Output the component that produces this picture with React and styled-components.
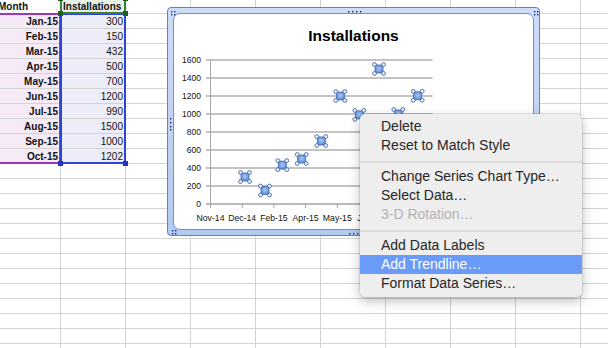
/* Librerias */
import styled, { createGlobalStyle } from "styled-components";

/*
  * Hoja de cálculo con gráfico de dispersión y menú contextual
*/

const COL_W = 65;
const ROW_H = 15;
const SHEET_X = -4; // la hoja está desplazada: la columna A se ve cortada
const SHEET_Y = -1;
const COLS = 10;
const ROWS = 24;

const PURPLE_BG = "#f5eaf6";
const BLUE_BG = "#ededf9";
const GREEN_BG = "#eaf1e6";

const data = [
  ["Jan-15", 300],
  ["Feb-15", 150],
  ["Mar-15", 432],
  ["Apr-15", 500],
  ["May-15", 700],
  ["Jun-15", 1200],
  ["Jul-15", 990],
  ["Aug-15", 1500],
  ["Sep-15", 1000],
  ["Oct-15", 1202],
];

// Posición horizontal de cada punto (eje de fechas)
const pointX = [245, 265, 282.3, 301.7, 321.3, 340.3, 359.3, 379, 398.3, 417.7];
const axisLabels = ["Nov-14", "Dec-14", "Feb-15", "Apr-15", "May-15", "Jul-15", "Aug-15", "Oct-15"];

const valueY = (v) => 204 - v * 0.09;
const lineX = (c) => SHEET_X + (c + 1) * COL_W - 1;
const lineY = (r) => SHEET_Y + (r + 1) * ROW_H - 1;

const GlobalStyle = createGlobalStyle`
  html, body {
    margin: 0;
    padding: 0;
    background: #fff;
    overflow: hidden;
  }

  body {
    font-family: "Liberation Sans", Arial, sans-serif;
  }
`;

// Lienzo de la pantalla
const Screen = styled.div`
  position: relative;
  width: 608px;
  height: 348px;
  overflow: hidden;
`;

// Cuadrícula de celdas
const Sheet = styled.div`
  display: grid;
  grid-template-columns: repeat(${COLS}, ${COL_W}px);
  grid-auto-rows: ${ROW_H}px;
  margin: ${SHEET_Y}px 0 0 ${SHEET_X}px;
  width: max-content;
`;

const Cell = styled.div`
  box-sizing: border-box;
  border-right: 1px solid #d3d3d3;
  border-bottom: 1px solid #d3d3d3;
  padding: 2px 2px 0;

  font-size: 10px;
  line-height: 12px;
  font-weight: ${(p) => (p.$bold ? 700 : 400)};
  text-align: ${(p) => p.$align || "left"};
  color: #111;
  background: ${(p) => p.$tint || "#fff"};

  white-space: nowrap;
  overflow: hidden;
`;

// Rangos resaltados por la serie seleccionada
const Range = styled.div`
  position: absolute;
  box-sizing: border-box;
  border: 2px solid ${(p) => p.$color};
  pointer-events: none;
`;

const Handle = styled.span`
  position: absolute;
  width: 5px;
  height: 5px;
  background: ${(p) => p.$color};
  ${(p) => (p.$top ? "top: -4px;" : "bottom: -4px;")}
  ${(p) => (p.$left ? "left: -4px;" : "right: -4px;")}
`;

// Ventana del gráfico
const ChartWindow = styled.div`
  position: absolute;
  left: 167px;
  top: 7px;
  width: 373px;
  height: 229px;
  box-sizing: border-box;
  padding: 5px;

  background: linear-gradient(to bottom, #cfdcf8, #b3caf2);
  border: 1px solid #5b7fdf;
  border-radius: 4px;
`;

const ChartBody = styled.div`
  box-sizing: border-box;
  height: 100%;
  display: flex;
  flex-direction: column;

  background: #fff;
  border: 1px solid #6e8de2;
  border-radius: 7px;
  overflow: hidden;
`;

const ChartTitle = styled.div`
  padding-top: 13px;
  font-size: 15.5px;
  line-height: 18px;
  font-weight: 700;
  text-align: center;
  color: #000;
`;

const PlotSvg = styled.svg`
  display: block;
  flex: 1;
  font-family: "Liberation Sans", Arial, sans-serif;
`;

const Grip = styled.svg`
  position: absolute;
  left: ${(p) => p.$x}px;
  top: ${(p) => p.$y}px;
  overflow: visible;
`;

// Menú contextual
const Menu = styled.div`
  position: absolute;
  left: 360px;
  top: 114px;
  width: 222px;
  box-sizing: border-box;
  padding: 3px 0 4px;

  background: #eeeeee;
  border-radius: 5px;
  box-shadow: 0 0 0 1px rgba(0, 0, 0, 0.09), 0 4px 12px rgba(0, 0, 0, 0.25);

  font-size: 14px;
`;

const MenuItem = styled.div`
  height: 19px;
  line-height: 19px;
  padding-left: 21px;
  white-space: nowrap;

  color: ${(p) => (p.$disabled ? "#b3b3b3" : p.$active ? "#fff" : "#262626")};
  background: ${(p) => (p.$active ? "#6a9bf8" : "transparent")};
`;

const MenuSeparator = styled.div`
  height: 2px;
  margin: 6px 0 4px;
  background: #dcdcdc;
`;

function SheetGrid() {
  const cells = [];

  for (let r = 0; r < ROWS; r++) {
    for (let c = 0; c < COLS; c++) {
      let text = "";
      let props = {};

      if (r === 0 && c === 0) {
        text = "Month";
        props = { $bold: true };
      } else if (r === 0 && c === 1) {
        text = "Installations";
        props = { $bold: true, $tint: GREEN_BG };
      } else if (r >= 1 && r <= data.length && c < 2) {
        const [month, value] = data[r - 1];
        text = c === 0 ? month : value;
        props = c === 0
          ? { $bold: true, $align: "right", $tint: PURPLE_BG }
          : { $align: "right", $tint: BLUE_BG };
      }

      cells.push(<Cell key={`${r}-${c}`} {...props}>{text}</Cell>);
    }
  }

  return <Sheet>{cells}</Sheet>;
}

function SeriesRange({ c1, c2, r1, r2, color, handle }) {
  const left = lineX(c1);
  const top = lineY(r1);

  return (
    <Range
      $color={color}
      style={{ left, top, width: lineX(c2) - left + 1, height: lineY(r2) - top + 1 }}
    >
      <Handle $color={handle} $top $left />
      <Handle $color={handle} $top />
      <Handle $color={handle} $left />
      <Handle $color={handle} />
    </Range>
  );
}

function GripDots({ x, y, dots }) {
  return (
    <Grip $x={x} $y={y} width="14" height="14">
      {dots.map(([dx, dy], i) => (
        <rect key={i} x={dx} y={dy} width="1.4" height="1.4" fill="#1c2b6b" />
      ))}
    </Grip>
  );
}

function Marker({ x, y }) {
  const corners = [[-4.5, -4.5], [4.5, -4.5], [-4.5, 4.5], [4.5, 4.5]];

  return (
    <g transform={`translate(${x} ${y})`}>
      <rect x="-4" y="-4" width="8" height="8" fill="url(#markerFill)" stroke="#3f66ad" strokeWidth="0.8" />
      {corners.map(([dx, dy], i) => (
        <circle key={i} cx={dx} cy={dy} r="1.9" fill="#eef3fc" stroke="#44649e" strokeWidth="0.9" />
      ))}
    </g>
  );
}

function Chart() {
  const grid = [200, 400, 600, 800, 1000, 1200, 1400, 1600];
  const ticks = axisLabels.map((_, i) => 210.5 + i * 31.7);

  return (
    <ChartWindow>
      <ChartBody>
        <ChartTitle>Installations</ChartTitle>

        <PlotSvg viewBox="174 45 359 184" width="359" height="184">
          <defs>
            <radialGradient id="markerFill" cx="50%" cy="45%" r="65%">
              <stop offset="0" stopColor="#a9c8f4" />
              <stop offset="1" stopColor="#4e80d4" />
            </radialGradient>
          </defs>

          {grid.map((v) => (
            <line key={v} x1="206" x2="432.5" y1={valueY(v)} y2={valueY(v)} stroke="#c3c3c3" strokeWidth="1.8" />
          ))}

          <line x1="210.5" x2="210.5" y1="60" y2="204" stroke="#a8a8a8" strokeWidth="1" />
          <line x1="206" x2="432.5" y1="204" y2="204" stroke="#a3a3a3" strokeWidth="1.5" />

          {ticks.map((t) => (
            <line key={t} x1={t} x2={t} y1="204" y2="208" stroke="#a3a3a3" strokeWidth="1" />
          ))}

          {[0, ...grid].map((v) => (
            <text key={v} x="201" y={valueY(v) + 3} fontSize="8.5" textAnchor="end" fill="#111">
              {v}
            </text>
          ))}

          {axisLabels.map((label, i) => (
            <text key={label} x={ticks[i]} y="221" fontSize="8.7" textAnchor="middle" fill="#111">
              {label}
            </text>
          ))}

          {data.map(([month, value], i) => (
            <Marker key={month} x={pointX[i]} y={valueY(value)} />
          ))}
        </PlotSvg>
      </ChartBody>

      {/* Asas de redimensionado del marco */}
      <GripDots x={3} y={3} dots={[[0, 0], [3, 0], [0, 3], [3, 3]]} />
      <GripDots x={180} y={2.5} dots={[[0, 0], [4, 0], [8, 0], [12, 0]]} />
      <GripDots x={366} y={3} dots={[[0, 0], [3, 0], [0, 3], [3, 3]]} />
      <GripDots x={2} y={110} dots={[[0, 0], [0, 4], [0, 8], [0, 11]]} />
      <GripDots x={3.5} y={222} dots={[[0, 0], [3, 0], [0, 3], [3, 3]]} />
      <GripDots x={180.5} y={225} dots={[[0, 0], [4, 0], [8, 0]]} />
    </ChartWindow>
  );
}

function ContextMenu() {
  return (
    <Menu>
      <MenuItem>Delete</MenuItem>
      <MenuItem>Reset to Match Style</MenuItem>
      <MenuSeparator />
      <MenuItem>Change Series Chart Type…</MenuItem>
      <MenuItem>Select Data…</MenuItem>
      <MenuItem $disabled>3-D Rotation…</MenuItem>
      <MenuSeparator />
      <MenuItem>Add Data Labels</MenuItem>
      <MenuItem $active>Add Trendline…</MenuItem>
      <MenuItem>Format Data Series…</MenuItem>
    </Menu>
  );
}

export default function App() {
  return (
    <Screen>
      <GlobalStyle />
      <SheetGrid />

      <SeriesRange c1={-1} c2={0} r1={0} r2={10} color="#9b36c4" handle="#8a22b8" />
      <SeriesRange c1={0} c2={1} r1={0} r2={10} color="#2d45d2" handle="#2233cc" />
      <SeriesRange c1={0} c2={1} r1={-1} r2={0} color="#3a7f3a" handle="#1f5f1f" />

      <Chart />
      <ContextMenu />
    </Screen>
  );
}
